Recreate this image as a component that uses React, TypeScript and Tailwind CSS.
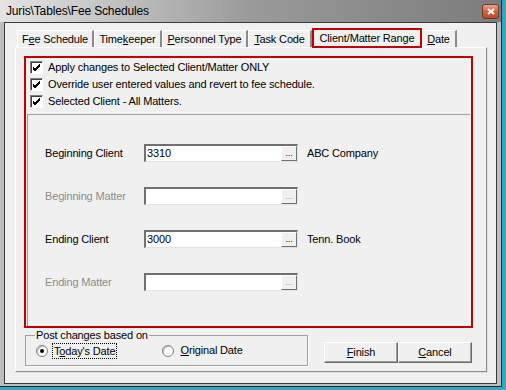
const font = { fontFamily: '"Liberation Sans", Arial, sans-serif' };

const tabs = [
  { pre: "F", key: "e", post: "e Schedule", w: "w-[77px]" },
  { pre: "Time", key: "k", post: "eeper", w: "w-[68px]" },
  { pre: "", key: "P", post: "ersonnel Type", w: "w-[86px]" },
  { pre: "", key: "T", post: "ask Code", w: "w-[64px]" },
];

const Check = () => (
  <div className="w-[13px] h-[13px] border-t border-l border-[#808080] border-r border-b border-r-white border-b-white bg-white flex items-center justify-center shadow-[inset_1px_1px_0_#404040]">
    <svg width="9" height="9" viewBox="0 0 9 9">
      <path d="M1 4 L3 6 L8 1 M1 5 L3 7 L8 2 M1 6 L3 8 L8 3" stroke="#000" strokeWidth="1" fill="none" />
    </svg>
  </div>
);

const Field = ({ label, value, desc, disabled }: { label: string; value?: string; desc?: string; disabled?: boolean }) => (
  <div className="flex items-center h-[18px]">
    <div className={`w-[99px] ${disabled ? "text-[#8d8d8d]" : "text-black"}`}>{label}</div>
    <div className="w-[154px] h-[18px] bg-white border-t-2 border-l-2 border-[#707070] border-r border-b border-r-[#e3e3e3] border-b-[#e3e3e3] flex items-center justify-between pl-[1px]">
      <span className="leading-none">{value}</span>
      <div className="w-[16px] h-[15px] bg-[#f0f0f0] border border-t-white border-l-white border-r-[#707070] border-b-[#707070] flex items-end justify-center pb-[2px]">
        <span className={`text-[9px] leading-none ${disabled ? "text-[#a0a0a0]" : "text-black"}`}>...</span>
      </div>
    </div>
    {desc && <div className="ml-[9px]">{desc}</div>}
  </div>
);

const Radio = ({ on }: { on?: boolean }) => (
  <div className="w-[12px] h-[12px] rounded-full border border-[#808080] bg-white flex items-center justify-center shadow-[inset_1px_1px_0_#c0c0c0]">
    {on && <div className="w-[4px] h-[4px] rounded-full bg-black" />}
  </div>
);

export default function App() {
  return (
    <div className="w-[506px] h-[390px] bg-[#33a7bf] text-[11px] tracking-[-0.15px] text-black" style={font}>
      <div className="w-[502px] h-[387px] bg-[#bdbdbd] border-r border-b border-[#2a2a2a] flex flex-col">
        <div className="h-[22px] flex items-center justify-between pl-[6px] pr-[2px] bg-gradient-to-r from-[#e4e4e4] via-[#9a9a9a] to-[#7c7c7c]">
          <span className="text-[12px] text-black">Juris\Tables\Fee Schedules</span>
          <div className="w-[17px] h-[15px] rounded-[3px] border border-[#6d3b2e] bg-gradient-to-b from-[#e9a48f] via-[#d05f3f] to-[#c0482a] flex items-center justify-center">
            <svg width="8" height="7" viewBox="0 0 8 7">
              <path d="M1 1 L7 6 M7 1 L1 6" stroke="#fff" strokeWidth="2" />
            </svg>
          </div>
        </div>
        <div className="flex-1 px-[4px] pb-[2px]">
          <div className="h-[362px] bg-[#f0f0f0] border border-[#3a3a3a] pl-[10px] pt-[4px]">
            <div className="flex items-end h-[20px] pl-[2px]">
              {tabs.map((t, i) => (
                <div key={i} className={`${t.w} h-[17px] border-t border-l border-white border-r-2 border-r-[#8a8a8a] flex items-center justify-center`}>
                  <span>{t.pre}<u>{t.key}</u>{t.post}</span>
                </div>
              ))}
              <div className="w-[110px] h-[20px] border-2 border-[#c00000] bg-[#f0f0f0] flex items-center justify-center relative top-[1px] z-10">
                <span>Client/Matter Ran<u>g</u>e</span>
              </div>
              <div className="w-[35px] h-[17px] border-t border-white border-r-2 border-r-[#8a8a8a] flex items-center justify-center">
                <span><u>D</u>ate</span>
              </div>
            </div>
            <div className="w-[472px] h-[325px] border border-t-white border-l-white border-r-[#8a8a8a] border-b-[#8a8a8a] shadow-[1px_1px_0_#e0e0e0] pl-[8px] pt-[8px]">
              <div className="w-[449px] h-[272px] border-2 border-[#c00000] flex flex-col">
                <div className="pt-[1px] pl-[4px]">
                  {[
                    "Apply changes to Selected Client/Matter ONLY",
                    "Override user entered values and revert to fee schedule.",
                    "Selected Client - All Matters.",
                  ].map((s) => (
                    <div key={s} className="h-[17px] flex items-center gap-[5px]">
                      <Check />
                      <span>{s}</span>
                    </div>
                  ))}
                </div>
                <div className="mt-[4px] mx-[1px] flex-1 border-t border-l border-[#a0a0a0] pl-[17px] pt-[29px] flex flex-col gap-[25px]">
                  <Field label="Beginning Client" value="3310" desc="ABC Company" />
                  <Field label="Beginning Matter" disabled />
                  <Field label="Ending Client" value="3000" desc="Tenn. Book" />
                  <Field label="Ending Matter" disabled />
                </div>
              </div>
              <div className="flex items-start">
                <fieldset className="ml-[1px] mt-[1px] w-[283px] h-[37px] border border-[#a0a0a0] shadow-[1px_1px_0_#fff] px-[10px]">
                  <legend className="px-[1px] -ml-[1px] leading-[13px]">Post changes based on</legend>
                  <div className="flex items-center h-[17px]">
                    <Radio on />
                    <span className="ml-[4px] px-[1px] border border-dotted border-black leading-[14px]">T<u>o</u>day's Date</span>
                    <div className="ml-[45px]"><Radio /></div>
                    <span className="ml-[6px]"><u>O</u>riginal Date</span>
                  </div>
                </fieldset>
                <div className="flex ml-[16px] mt-[14px]">
                  {[["F", "inish"], ["C", "ancel"]].map(([k, r]) => (
                    <div key={k} className="w-[74px] h-[21px] bg-[#f0f0f0] border border-t-white border-l-white border-r-[#696969] border-b-[#696969] shadow-[inset_-1px_-1px_0_#a0a0a0] flex items-center justify-center">
                      <span><u>{k}</u>{r}</span>
                    </div>
                  ))}
                </div>
              </div>
            </div>
          </div>
        </div>
      </div>
    </div>
  );
}
